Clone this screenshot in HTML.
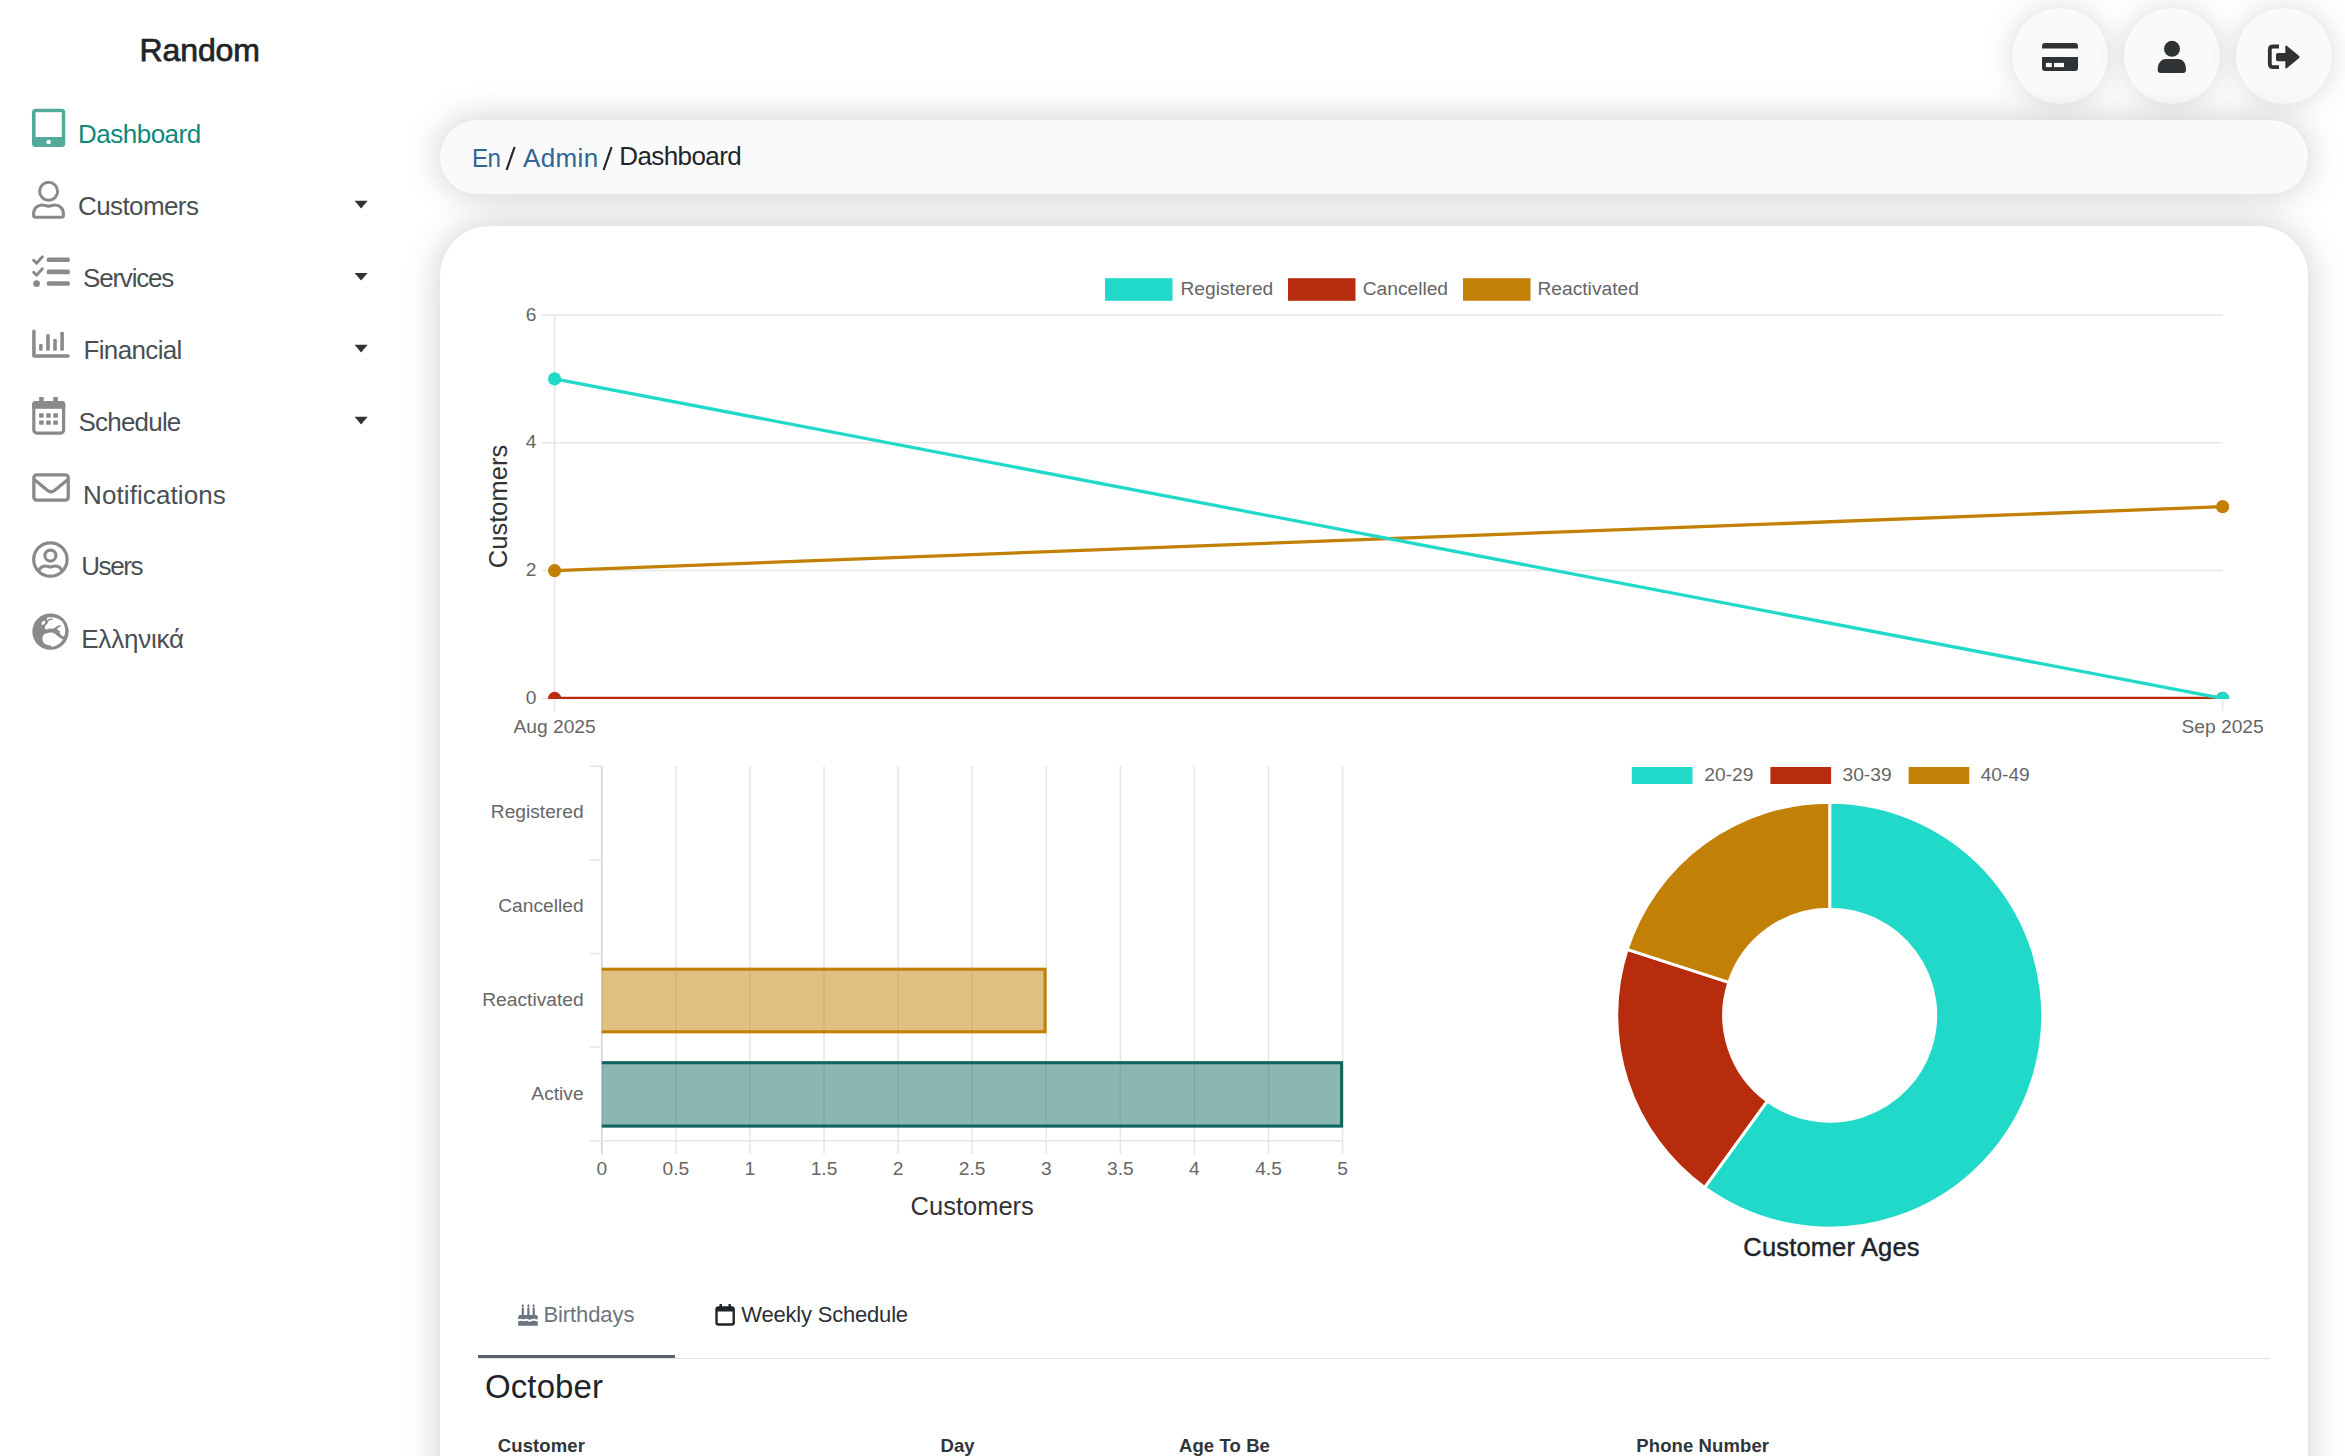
<!DOCTYPE html>
<html><head><meta charset="utf-8"><title>Dashboard</title>
<style>
html,body{margin:0;padding:0;background:#fff;}
body{width:2345px;height:1456px;overflow:hidden;position:relative;font-family:"Liberation Sans", sans-serif;}
.t{position:absolute;white-space:nowrap;}
.abs{position:absolute;}
.btn{position:absolute;top:8px;width:96px;height:96px;border-radius:50%;background:#fafafa;box-shadow:0 0 30px rgba(0,0,0,0.15);}
.bar{position:absolute;left:440px;top:120px;width:1868px;height:74px;border-radius:37px;background:#fafafa;box-shadow:0 0 36px rgba(0,0,0,0.2);}
.card{position:absolute;left:440px;top:226px;width:1868px;height:1400px;border-radius:50px;background:#fff;box-shadow:0 0 36px rgba(0,0,0,0.2);}
svg{position:absolute;overflow:visible;}
</style></head><body>
<div class="t" style="left:139.5px;top:33.91px;font-size:32px;line-height:32px;color:#212529;font-weight:400;letter-spacing:-0.1px;-webkit-text-stroke:0.75px #212529;">Random</div>
<div class="t" style="left:78px;top:121.49px;font-size:26px;line-height:26px;color:#10897c;font-weight:400;letter-spacing:-0.5px;">Dashboard</div>
<div class="t" style="left:78px;top:193.09px;font-size:26px;line-height:26px;color:#4a4f54;font-weight:400;letter-spacing:-0.6px;">Customers</div>
<div class="t" style="left:83px;top:264.79px;font-size:26px;line-height:26px;color:#4a4f54;font-weight:400;letter-spacing:-1.2px;">Services</div>
<div class="t" style="left:83.5px;top:337.09px;font-size:26px;line-height:26px;color:#4a4f54;font-weight:400;letter-spacing:-0.65px;">Financial</div>
<div class="t" style="left:78.5px;top:409.19px;font-size:26px;line-height:26px;color:#4a4f54;font-weight:400;letter-spacing:-0.8px;">Schedule</div>
<div class="t" style="left:83px;top:481.89px;font-size:26px;line-height:26px;color:#4a4f54;font-weight:400;letter-spacing:0.1px;">Notifications</div>
<div class="t" style="left:81.2px;top:553.49px;font-size:26px;line-height:26px;color:#4a4f54;font-weight:400;letter-spacing:-1.4px;">Users</div>
<div class="t" style="left:81.2px;top:625.69px;font-size:26px;line-height:26px;color:#4a4f54;font-weight:400;letter-spacing:-0.2px;">Ελληνικά</div>
<svg style="left:0;top:0" width="420" height="700" viewBox="0 0 420 700">
<!-- tablet -->
<rect x="32" y="108.7" width="33.2" height="38.3" rx="3.5" fill="#52aa9c"/>
<rect x="35.6" y="112.2" width="26.2" height="24.8" fill="#fff"/>
<circle cx="48.6" cy="142" r="2.3" fill="#fff"/>
<!-- user outline -->
<circle cx="48.6" cy="191.3" r="9" fill="none" stroke="#8a8a8a" stroke-width="3"/>
<path d="M35.6,217.2 Q33.6,217.2 33.6,215.2 L33.6,214 C33.6,208.5 37.5,205 42,205 C45,205 47,206.3 48.5,206.3 C50,206.3 52,205 55,205 C59.5,205 63.4,208.5 63.4,214 L63.4,215.2 Q63.4,217.2 61.4,217.2 Z" fill="none" stroke="#8a8a8a" stroke-width="3.1" stroke-linejoin="round"/>
<!-- list check -->
<rect x="46.8" y="257.5" width="23" height="4.6" rx="1.5" fill="#8a8a8a"/>
<rect x="46.8" y="269.6" width="23" height="4.6" rx="1.5" fill="#8a8a8a"/>
<rect x="46.8" y="281.2" width="23" height="4.6" rx="1.5" fill="#8a8a8a"/>
<path d="M33.6,260.2 L36.6,263.2 L42.4,256.8" fill="none" stroke="#8a8a8a" stroke-width="2.9" stroke-linecap="round" stroke-linejoin="round"/>
<path d="M33.6,272.2 L36.6,275.2 L42.4,268.8" fill="none" stroke="#8a8a8a" stroke-width="2.9" stroke-linecap="round" stroke-linejoin="round"/>
<circle cx="36.6" cy="283.6" r="3.4" fill="#8a8a8a"/>
<!-- chart -->
<path d="M33.9,331.3 L33.9,356 L68,356" fill="none" stroke="#8a8a8a" stroke-width="3.5" stroke-linecap="round" stroke-linejoin="round"/>
<rect x="39.1" y="343.9" width="3.5" height="6.9" rx="1" fill="#8a8a8a"/>
<rect x="46.2" y="334.1" width="3.6" height="16.7" rx="1.6" fill="#8a8a8a"/>
<rect x="53.2" y="339" width="3.6" height="11.8" rx="1" fill="#8a8a8a"/>
<rect x="60.3" y="332" width="3.6" height="18.8" rx="0.8" fill="#8a8a8a"/>
<!-- calendar -->
<rect x="33.8" y="402.5" width="29.8" height="30.6" rx="3" fill="none" stroke="#8a8a8a" stroke-width="3.2"/>
<rect x="32.2" y="401" width="33" height="7.6" rx="3" fill="#8a8a8a"/>
<rect x="32.2" y="404" width="33" height="4.6" fill="#8a8a8a"/>
<rect x="39.1" y="397" width="4.6" height="5" fill="#8a8a8a"/>
<rect x="53.2" y="397" width="4.6" height="5" fill="#8a8a8a"/>
<g fill="#8a8a8a">
<rect x="39.1" y="413.3" width="4.6" height="4.4" rx="0.6"/><rect x="46.2" y="413.3" width="4.6" height="4.4" rx="0.6"/><rect x="53.3" y="413.3" width="4.6" height="4.4" rx="0.6"/>
<rect x="39.1" y="420.4" width="4.6" height="4.4" rx="0.6"/><rect x="46.2" y="420.4" width="4.6" height="4.4" rx="0.6"/><rect x="53.3" y="420.4" width="4.6" height="4.4" rx="0.6"/>
</g>
<!-- envelope -->
<rect x="33.85" y="474.95" width="34.4" height="25.2" rx="2.8" fill="none" stroke="#8a8a8a" stroke-width="3.3"/>
<path d="M34.5,479.8 L47.3,490.3 Q51.05,493.2 54.8,490.3 L67.6,479.8" fill="none" stroke="#8a8a8a" stroke-width="3.3" stroke-linejoin="round"/>
<!-- circle user -->
<circle cx="50.4" cy="559.5" r="16.7" fill="none" stroke="#8a8a8a" stroke-width="3.2"/>
<circle cx="50.4" cy="555.6" r="5.5" fill="none" stroke="#8a8a8a" stroke-width="3.2"/>
<path d="M38.8,570.5 C40.5,567.2 43,566 45.5,566 C47.5,566 49,567 50.4,567 C51.8,567 53.3,566 55.3,566 C57.8,566 60.3,567.2 62,570.5" fill="none" stroke="#8a8a8a" stroke-width="3.2"/>
<!-- globe -->
<circle cx="50.5" cy="631.6" r="18.2" fill="#8a8a8a"/>
<path d="M47.6,617.5 C52,616.8 57,617.5 61,620.5 C64,623 65.5,628 65.2,632 C65,634 64.5,636 63.5,636.5 C62,636 60.5,634.5 59.5,633 L60,631.5 C59,630.5 58,630 57,629.5 L58,627.8 C59.5,627 61,626.5 61.5,625.5 L58.5,625.5 C56.5,626.5 55,627.8 53.5,628.5 C52.5,628.2 51.5,628.5 50.4,628.8 L50,627.5 L49.2,629 C47.5,629.2 46,629.5 45,629 C44.5,627.5 45,625.5 46.5,624.5 C48,623 48.5,622 47.5,621 C46.5,619.5 46.8,618.2 47.6,617.5 Z" fill="#fff"/>
<path d="M42.5,639 C42.3,636 44,633.5 47,633.3 C49,632.5 51,632.3 53.5,633 C55,633.5 56,634.5 57,635.5 C59,637 61,638.5 63,639.5 C61,643 57,646 51.5,647 L51,645.5 C48,645.5 45,644.5 43.5,642.5 C42.8,641.5 42.5,640.5 42.5,639 Z" fill="#fff"/>
<ellipse cx="43.4" cy="622.8" rx="2.4" ry="1.5" transform="rotate(-45 43.4 622.8)" fill="#fff"/>
<path d="M47.5,621 C49,619.5 51,619 52.5,619.5" fill="none" stroke="#8a8a8a" stroke-width="1.6"/>
<!-- carets -->
<g fill="#2f3337">
<path d="M354.6,200.8 L367.6,200.8 L361.1,208.4 Z"/>
<path d="M354.6,272.9 L367.6,272.9 L361.1,280.5 Z"/>
<path d="M354.6,344.8 L367.6,344.8 L361.1,352.4 Z"/>
<path d="M354.6,416.8 L367.6,416.8 L361.1,424.4 Z"/>
</g>
</svg>
<div class="btn" style="left:2012px"></div>
<div class="btn" style="left:2124px"></div>
<div class="btn" style="left:2236px"></div>
<svg style="left:0;top:0" width="2345" height="120">
<g fill="#303336">
<!-- credit card -->
<path d="M2045,43 L2075,43 Q2078,43 2078,46 L2078,48.6 L2042,48.6 L2042,46 Q2042,43 2045,43 Z"/>
<path d="M2042,57.1 L2078,57.1 L2078,68 Q2078,71 2075,71 L2045,71 Q2042,71 2042,68 Z"/>
</g>
<g fill="#fafafa">
<rect x="2045.9" y="62.9" width="5.9" height="4.2"/>
<rect x="2054" y="62.9" width="10" height="4.2"/>
</g>
<g fill="#303336">
<!-- user -->
<circle cx="2172" cy="48.8" r="8"/>
<path d="M2157.7,70 C2157.7,63 2161,59 2166,59 L2178,59 C2183,59 2186,63 2186,70 Q2186,73 2183,73 L2160.7,73 Q2157.7,73 2157.7,70 Z"/>
<!-- sign out -->
<path d="M2279,44.6 L2273,44.6 Q2267.9,44.6 2267.9,49.7 L2267.9,63.9 Q2267.9,69 2273,69 L2279,69 L2279,65.2 L2273,65.2 Q2271.7,65.2 2271.7,63.9 L2271.7,49.7 Q2271.7,48.4 2273,48.4 L2279,48.4 Z"/>
<path d="M2276,54.7 Q2276,52.9 2277.8,52.9 L2285.3,52.9 L2285.3,46.8 Q2285.3,44.6 2287,45.9 L2298.9,55.8 Q2300.2,57 2298.9,58.2 L2287,68.1 Q2285.3,69.4 2285.3,67.2 L2285.3,61.3 L2277.8,61.3 Q2276,61.3 2276,59.5 Z"/>
</g>
</svg>
<div class="bar"></div>
<div class="t" style="left:472.3px;top:144.79px;font-size:26px;line-height:26px;color:#2e6694;font-weight:400;letter-spacing:-0.6px;transform:scaleX(0.93);transform-origin:0 0;">En</div>
<div class="t" style="left:523px;top:144.79px;font-size:26px;line-height:26px;color:#2e6694;font-weight:400;letter-spacing:0.35px;">Admin</div>
<div class="t" style="left:619.3px;top:143.49px;font-size:26px;line-height:26px;color:#212529;font-weight:400;letter-spacing:-0.6px;">Dashboard</div>
<svg style="left:0;top:0" width="800" height="200"><g stroke="#212529" stroke-width="2.2"><line x1="506.6" y1="170" x2="514.6" y2="147"/><line x1="603.6" y1="170" x2="611.6" y2="147"/></g></svg>
<div class="card"></div>
<svg style="left:0;top:0" width="2345" height="1456">
<rect x="1105" y="278.2" width="67.5" height="22.6" fill="#21d9c9"/>
<text x="1180.5" y="295" font-size="19.2" fill="#666666">Registered</text>
<rect x="1288" y="278.2" width="67.5" height="22.6" fill="#b82c0e"/>
<text x="1362.7" y="295" font-size="19.2" fill="#666666">Cancelled</text>
<rect x="1463" y="278.2" width="67.5" height="22.6" fill="#c28006"/>
<text x="1537.5" y="295" font-size="19.2" fill="#666666">Reactivated</text>
<line x1="542" y1="698.4" x2="2222.6" y2="698.4" stroke="#e6e6e6" stroke-width="1.5"/>
<text x="536.5" y="704.0" font-size="19.2" fill="#666666" text-anchor="end">0</text>
<line x1="542" y1="570.6" x2="2222.6" y2="570.6" stroke="#e6e6e6" stroke-width="1.5"/>
<text x="536.5" y="576.2" font-size="19.2" fill="#666666" text-anchor="end">2</text>
<line x1="542" y1="442.79999999999995" x2="2222.6" y2="442.79999999999995" stroke="#e6e6e6" stroke-width="1.5"/>
<text x="536.5" y="448.4" font-size="19.2" fill="#666666" text-anchor="end">4</text>
<line x1="542" y1="315.00000000000006" x2="2222.6" y2="315.00000000000006" stroke="#e6e6e6" stroke-width="1.5"/>
<text x="536.5" y="320.6000000000001" font-size="19.2" fill="#666666" text-anchor="end">6</text>
<line x1="554.6" y1="315.0" x2="554.6" y2="710.7" stroke="#e6e6e6" stroke-width="1.5"/>
<line x1="2222.6" y1="698.4" x2="2222.6" y2="710.7" stroke="#e6e6e6" stroke-width="1.5"/>
<text x="554.6" y="733" font-size="19.2" fill="#666666" text-anchor="middle">Aug 2025</text>
<text x="2222.6" y="733" font-size="19.2" fill="#666666" text-anchor="middle">Sep 2025</text>
<text transform="translate(507,506.5) rotate(-90)" font-size="25.5" fill="#333" text-anchor="middle">Customers</text>
<defs><clipPath id="cp1"><rect x="540" y="300" width="1700" height="398.9"/></clipPath></defs>
<g clip-path="url(#cp1)">
<line x1="554.6" y1="698.4" x2="2222.6" y2="698.4" stroke="#b82c0e" stroke-width="3.3"/>
<circle cx="554.6" cy="698.4" r="6.6" fill="#b82c0e"/>
<circle cx="2222.6" cy="698.4" r="6.6" fill="#b82c0e"/>
<line x1="554.6" y1="570.6" x2="2222.6" y2="506.70000000000005" stroke="#c28006" stroke-width="3.3"/>
<circle cx="554.6" cy="570.6" r="6.6" fill="#c28006"/>
<circle cx="2222.6" cy="506.70000000000005" r="6.6" fill="#c28006"/>
<line x1="554.6" y1="378.9" x2="2222.6" y2="698.4" stroke="#21d9c9" stroke-width="3.3"/>
<circle cx="554.6" cy="378.9" r="6.6" fill="#21d9c9"/>
<circle cx="2222.6" cy="698.4" r="6.6" fill="#21d9c9"/>
</g>
<line x1="601.80" y1="766.3" x2="601.80" y2="1154" stroke="#d2d2d2" stroke-width="1.5"/>
<text x="601.80" y="1175.3" font-size="19.2" fill="#666666" text-anchor="middle">0</text>
<line x1="675.88" y1="766.3" x2="675.88" y2="1154" stroke="#e6e6e6" stroke-width="1.5"/>
<text x="675.88" y="1175.3" font-size="19.2" fill="#666666" text-anchor="middle">0.5</text>
<line x1="749.96" y1="766.3" x2="749.96" y2="1154" stroke="#e6e6e6" stroke-width="1.5"/>
<text x="749.96" y="1175.3" font-size="19.2" fill="#666666" text-anchor="middle">1</text>
<line x1="824.04" y1="766.3" x2="824.04" y2="1154" stroke="#e6e6e6" stroke-width="1.5"/>
<text x="824.04" y="1175.3" font-size="19.2" fill="#666666" text-anchor="middle">1.5</text>
<line x1="898.12" y1="766.3" x2="898.12" y2="1154" stroke="#e6e6e6" stroke-width="1.5"/>
<text x="898.12" y="1175.3" font-size="19.2" fill="#666666" text-anchor="middle">2</text>
<line x1="972.20" y1="766.3" x2="972.20" y2="1154" stroke="#e6e6e6" stroke-width="1.5"/>
<text x="972.20" y="1175.3" font-size="19.2" fill="#666666" text-anchor="middle">2.5</text>
<line x1="1046.28" y1="766.3" x2="1046.28" y2="1154" stroke="#e6e6e6" stroke-width="1.5"/>
<text x="1046.28" y="1175.3" font-size="19.2" fill="#666666" text-anchor="middle">3</text>
<line x1="1120.36" y1="766.3" x2="1120.36" y2="1154" stroke="#e6e6e6" stroke-width="1.5"/>
<text x="1120.36" y="1175.3" font-size="19.2" fill="#666666" text-anchor="middle">3.5</text>
<line x1="1194.44" y1="766.3" x2="1194.44" y2="1154" stroke="#e6e6e6" stroke-width="1.5"/>
<text x="1194.44" y="1175.3" font-size="19.2" fill="#666666" text-anchor="middle">4</text>
<line x1="1268.52" y1="766.3" x2="1268.52" y2="1154" stroke="#e6e6e6" stroke-width="1.5"/>
<text x="1268.52" y="1175.3" font-size="19.2" fill="#666666" text-anchor="middle">4.5</text>
<line x1="1342.60" y1="766.3" x2="1342.60" y2="1154" stroke="#e6e6e6" stroke-width="1.5"/>
<text x="1342.60" y="1175.3" font-size="19.2" fill="#666666" text-anchor="middle">5</text>
<line x1="589.2" y1="766.30" x2="601.8" y2="766.30" stroke="#e6e6e6" stroke-width="1.5"/>
<line x1="589.2" y1="859.92" x2="601.8" y2="859.92" stroke="#e6e6e6" stroke-width="1.5"/>
<line x1="589.2" y1="953.55" x2="601.8" y2="953.55" stroke="#e6e6e6" stroke-width="1.5"/>
<line x1="589.2" y1="1047.17" x2="601.8" y2="1047.17" stroke="#e6e6e6" stroke-width="1.5"/>
<line x1="589.2" y1="1140.80" x2="601.8" y2="1140.80" stroke="#e6e6e6" stroke-width="1.5"/>
<line x1="601.8" y1="1140.8" x2="1342.6" y2="1140.8" stroke="#e6e6e6" stroke-width="1.5"/>
<text x="583.6" y="818.2" font-size="19.2" fill="#666666" text-anchor="end">Registered</text>
<text x="583.6" y="912.2" font-size="19.2" fill="#666666" text-anchor="end">Cancelled</text>
<text x="583.6" y="1006.2" font-size="19.2" fill="#666666" text-anchor="end">Reactivated</text>
<text x="583.6" y="1100.1" font-size="19.2" fill="#666666" text-anchor="end">Active</text>
<rect x="601.8" y="967.8" width="444.68" height="65.40" fill="rgba(194,128,6,0.5)"/>
<path d="M601.8,969.3 L1044.98,969.3 L1044.98,1031.7 L601.8,1031.7" fill="none" stroke="#c28006" stroke-width="3"/>
<rect x="601.8" y="1061.2" width="741.30" height="66.40" fill="rgba(23,110,101,0.5)"/>
<path d="M601.8,1062.7 L1341.60,1062.7 L1341.60,1126.1 L601.8,1126.1" fill="none" stroke="#0f665e" stroke-width="3"/>
<text x="972.2" y="1214.9" font-size="25.5" fill="#333" text-anchor="middle">Customers</text>
<path d="M1829.70,802.20 A213,213 0 1 1 1704.50,1187.52 L1767.39,1100.96 A106,106 0 1 0 1829.70,909.20 Z" fill="#21d9c9" stroke="#fff" stroke-width="3" stroke-linejoin="bevel"/>
<path d="M1704.50,1187.52 A213,213 0 0 1 1627.12,949.38 L1728.89,982.44 A106,106 0 0 0 1767.39,1100.96 Z" fill="#b82c0e" stroke="#fff" stroke-width="3" stroke-linejoin="bevel"/>
<path d="M1627.12,949.38 A213,213 0 0 1 1829.70,802.20 L1829.70,909.20 A106,106 0 0 0 1728.89,982.44 Z" fill="#c28006" stroke="#fff" stroke-width="3" stroke-linejoin="bevel"/>
<rect x="1631.8" y="767" width="60.7" height="17" fill="#21d9c9"/>
<text x="1704.3" y="781.4" font-size="19.2" fill="#666666">20-29</text>
<rect x="1770.4" y="767" width="60.7" height="17" fill="#b82c0e"/>
<text x="1842.5" y="781.4" font-size="19.2" fill="#666666">30-39</text>
<rect x="1908.6" y="767" width="60.7" height="17" fill="#c28006"/>
<text x="1980.7" y="781.4" font-size="19.2" fill="#666666">40-49</text>
</svg>
<div class="t" style="left:1331.5px;width:1000px;text-align:center;top:1234.81px;font-size:25.5px;line-height:25.5px;color:#212529;font-weight:400;letter-spacing:0.15px;-webkit-text-stroke:0.45px #212529;">Customer Ages</div>
<div class="abs" style="left:478px;top:1357.5px;width:1792px;height:1.5px;background:#dee2e6"></div>
<div class="abs" style="left:478.2px;top:1354.8px;width:196.5px;height:3.2px;background:#5a6168"></div>
<div class="t" style="left:543.5px;top:1303.98px;font-size:22px;line-height:22px;color:#6c757d;font-weight:400;letter-spacing:-0.1px;">Birthdays</div>
<div class="t" style="left:741.3px;top:1303.98px;font-size:22px;line-height:22px;color:#2b3035;font-weight:400;letter-spacing:-0.2px;">Weekly Schedule</div>
<svg style="left:0;top:0" width="2345" height="1456">
<g fill="#6c757d">
<rect x="521.7" y="1307.5" width="2.2" height="8"/><rect x="527.3" y="1307.5" width="2.2" height="8"/><rect x="532.6" y="1307.5" width="2.2" height="8"/>
<path d="M522.8,1303.9 C524.3,1305.3 524.2,1306.7 522.8,1307 C521.4,1306.7 521.3,1305.3 522.8,1303.9 Z"/>
<path d="M528.4,1303.9 C529.9,1305.3 529.8,1306.7 528.4,1307 C527,1306.7 526.9,1305.3 528.4,1303.9 Z"/>
<path d="M533.7,1303.9 C535.2,1305.3 535.1,1306.7 533.7,1307 C532.3,1306.7 532.2,1305.3 533.7,1303.9 Z"/>
<path d="M518.2,1317 Q518.2,1315 520.2,1315 L535.8,1315 Q537.8,1315 537.8,1317 L537.8,1319.3 C536.2,1320.2 534.8,1318.2 533,1318.7 C531.5,1319.2 530,1320.2 528,1319.2 C526,1318.2 524.5,1319.8 523,1319.2 C521.5,1318.6 520,1318.5 518.2,1319.3 Z"/>
<path d="M518.2,1321.3 C520,1320.5 521.5,1320.6 523,1321.2 C524.5,1321.8 526,1320.2 528,1321.2 C530,1322.2 531.5,1321.2 533,1320.7 C534.8,1320.2 536.2,1322.2 537.8,1321.3 L537.8,1325.7 L518.2,1325.7 Z"/>
</g>
<g>
<rect x="716.5" y="1307.5" width="17.2" height="17" rx="2" fill="none" stroke="#212529" stroke-width="2.4"/>
<rect x="716.5" y="1307.5" width="17.2" height="4" fill="#212529"/>
<rect x="719.5" y="1304" width="2.4" height="4" fill="#212529"/>
<rect x="728.5" y="1304" width="2.4" height="4" fill="#212529"/>
</g>
</svg>
<div class="t" style="left:485px;top:1370.27px;font-size:33px;line-height:33px;color:#212529;font-weight:400;letter-spacing:0.1px;">October</div>
<div class="t" style="left:497.8px;top:1436.84px;font-size:18.5px;line-height:18.5px;color:#30353a;font-weight:700;letter-spacing:0.1px;">Customer</div>
<div class="t" style="left:940.5px;top:1436.84px;font-size:18.5px;line-height:18.5px;color:#30353a;font-weight:700;letter-spacing:0.1px;">Day</div>
<div class="t" style="left:1179px;top:1436.84px;font-size:18.5px;line-height:18.5px;color:#30353a;font-weight:700;letter-spacing:0.1px;">Age To Be</div>
<div class="t" style="left:1636.3px;top:1436.84px;font-size:18.5px;line-height:18.5px;color:#30353a;font-weight:700;letter-spacing:0.1px;">Phone Number</div>
</body></html>
